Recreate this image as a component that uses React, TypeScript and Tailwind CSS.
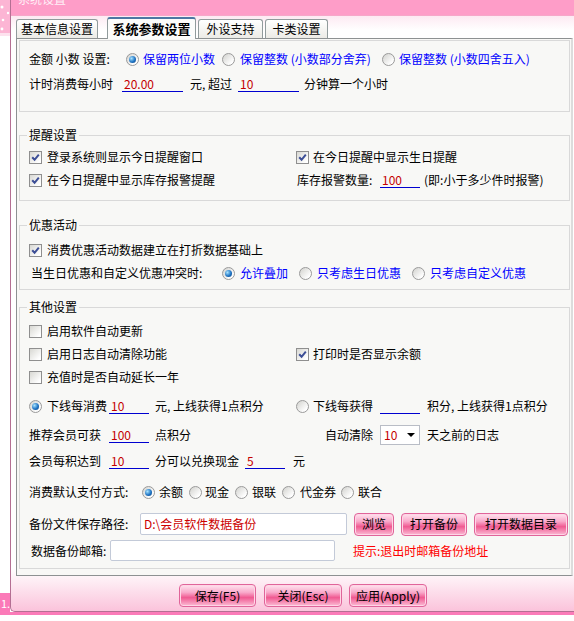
import React from "react";

// XP style radio button
function Radio({ checked = false }: { checked?: boolean }) {
  return (
    <span className="flex h-[13px] w-[13px] shrink-0 items-center justify-center rounded-full border border-[#9a9a9a] bg-[linear-gradient(135deg,#d2d2ce,#ffffff_80%)]">
      {checked && (
        <span className="h-[7px] w-[7px] rounded-full bg-[radial-gradient(circle_at_35%_35%,#a8e4ff,#1f74c4_55%,#0b3f7a)]" />
      )}
    </span>
  );
}

function Check({ checked = false }: { checked?: boolean }) {
  return (
    <span className="flex h-[13px] w-[13px] shrink-0 items-center justify-center border border-[#8f8f8f] bg-[linear-gradient(135deg,#d8d8d3,#ffffff_85%)]">
      {checked && (
        <svg width="9" height="9" viewBox="0 0 9 9">
          <path d="M1.2 4.2 L3.6 6.8 L7.8 1.6" fill="none" stroke="#3c4e96" strokeWidth="2" />
        </svg>
      )}
    </span>
  );
}

// underline-only edit box
function Line({ value = "", className = "" }: { value?: string; className?: string }) {
  return (
    <span className={`flex h-[15px] shrink-0 items-end border-b border-[#0000d0] pl-[2px] text-[#c40000] ${className}`}>
      {value}
    </span>
  );
}

function PinkBtn({ children, className = "" }: { children: React.ReactNode; className?: string }) {
  return (
    <span
      className={`flex shrink-0 items-center justify-center rounded-[4px] border border-[#e0649a] bg-[linear-gradient(#ffe4ef,#f9aacb_35%,#f05a92_60%,#fbbcd5)] shadow-[inset_0_0_0_1px_#ffd6e6] ${className}`}
    >
      {children}
    </span>
  );
}

const blue = "text-[#0000ff]";

function LeftStrip() {
  return (
    <div className="flex w-[10px] shrink-0 flex-col">
      <svg width="10" height="33" className="block">
        <rect width="10" height="33" fill="#fcb5d4" />
        <circle cx="2" cy="7" r="1.5" fill="#fff" />
        <circle cx="8" cy="13" r="1.2" fill="#fff" />
        <circle cx="3" cy="20" r="1.3" fill="#fff" />
        <circle cx="2" cy="29" r="1.4" fill="#fff" />
      </svg>
      <div className="h-[3px] bg-[#fde2ee]" />
      <div className="flex-1 bg-white" />
      <div className="flex h-[19px] items-center bg-[#fb7ab8] pl-[1px] text-[11px] text-white">1.</div>
    </div>
  );
}

function Tabs() {
  const tab =
    "flex h-[19px] shrink-0 items-center justify-center rounded-t-[3px] border border-b-0 border-[#919b9c] bg-[linear-gradient(#ffffff,#ecebe6)]";
  return (
    <div className="flex h-[22px] items-end">
      <span className={`${tab} w-[82px]`}>基本信息设置</span>
      <span className="relative z-10 -mb-[1px] ml-[9px] flex h-[22px] w-[89px] shrink-0 items-center justify-center rounded-t-[3px] border border-b-0 border-t-2 border-[#919b9c] border-t-[#4b77a3] bg-[#fcfcfb] text-[13px] font-bold">
        系统参数设置
      </span>
      <span className={`${tab} ml-[2px] w-[65px]`}>外设支持</span>
      <span className={`${tab} ml-[2px] w-[63px]`}>卡类设置</span>
    </div>
  );
}

function Group({ title, className, children }: { title: string; className: string; children: React.ReactNode }) {
  return (
    <fieldset className={`w-[551px] border border-[#d9d9d9] pl-[9px] ${className}`}>
      <legend className="-ml-[2px] px-[2px] leading-[14px]">{title}</legend>
      {children}
    </fieldset>
  );
}

function Panel() {
  return (
    <div className="flex w-[557px] flex-col border-t border-r-2 border-b border-l border-[#8d9192] border-r-[#dcdcdc] bg-[#f8f8f6] pb-[6px] pl-[2px]">
      {/* amount section */}
      <div className="mt-[1px] flex h-[72px] w-[551px] flex-col border border-[#d9d9d9] pl-[9px]">
        <div className="mt-[8px] flex h-[20px] items-center">
          <span className="w-[97px] shrink-0">金额 小数 设置:</span>
          <span className="flex w-[96px] shrink-0 items-center">
            <Radio checked />
            <span className={`ml-[4px] ${blue}`}>保留两位小数</span>
          </span>
          <span className="flex w-[160px] shrink-0 items-center">
            <Radio />
            <span className={`ml-[5px] ${blue}`}>保留整数 (小数部分舍弃)</span>
          </span>
          <span className="flex items-center">
            <Radio />
            <span className={`ml-[4px] ${blue}`}>保留整数 (小数四舍五入)</span>
          </span>
        </div>
        <div className="mt-[5px] flex h-[20px] items-center">
          <span className="w-[93px] shrink-0">计时消费每小时</span>
          <Line value="20.00" className="w-[61px]" />
          <span className="ml-[7px] w-[48px] shrink-0">元, 超过</span>
          <Line value="10" className="w-[61px]" />
          <span className="ml-[5px]">分钟算一个小时</span>
        </div>
      </div>

      <Group title="提醒设置" className="mt-[16px] pt-[5px] pb-[10px]">
        <div className="flex h-[20px] items-center">
          <span className="flex w-[267px] shrink-0 items-center">
            <Check checked />
            <span className="ml-[5px]">登录系统则显示今日提醒窗口</span>
          </span>
          <Check checked />
          <span className="ml-[4px]">在今日提醒中显示生日提醒</span>
        </div>
        <div className="mt-[3px] flex h-[20px] items-center">
          <span className="flex w-[268px] shrink-0 items-center">
            <Check checked />
            <span className="ml-[5px]">在今日提醒中显示库存报警提醒</span>
          </span>
          <span className="w-[83px] shrink-0">库存报警数量:</span>
          <Line value="100" className="w-[40px]" />
          <span className="ml-[4px]">(即:小于多少件时报警)</span>
        </div>
      </Group>

      <Group title="优惠活动" className="mt-[17px] pt-[8px] pb-[6px]">
        <div className="flex h-[20px] items-center">
          <Check checked />
          <span className="ml-[5px]">消费优惠活动数据建立在打折数据基础上</span>
        </div>
        <div className="mt-[3px] flex h-[20px] items-center">
          <span className="w-[193px] shrink-0 pl-[2px]">当生日优惠和自定义优惠冲突时:</span>
          <span className="flex w-[77px] shrink-0 items-center">
            <Radio checked />
            <span className={`ml-[5px] ${blue}`}>允许叠加</span>
          </span>
          <span className="flex w-[113px] shrink-0 items-center">
            <Radio />
            <span className={`ml-[5px] ${blue}`}>只考虑生日优惠</span>
          </span>
          <Radio />
          <span className={`ml-[5px] ${blue}`}>只考虑自定义优惠</span>
        </div>
      </Group>

      <Group title="其他设置" className="mt-[10px] pt-[7px] pb-[7px]">
        <div className="flex h-[20px] items-center">
          <Check />
          <span className="ml-[5px]">启用软件自动更新</span>
        </div>
        <div className="mt-[3px] flex h-[20px] items-center">
          <span className="flex w-[267px] shrink-0 items-center">
            <Check />
            <span className="ml-[5px]">启用日志自动清除功能</span>
          </span>
          <Check checked />
          <span className="ml-[4px]">打印时是否显示余额</span>
        </div>
        <div className="mt-[3px] flex h-[20px] items-center">
          <Check />
          <span className="ml-[5px]">充值时是否自动延长一年</span>
        </div>
        <div className="mt-[9px] flex h-[20px] items-center">
          <span className="flex w-[267px] shrink-0 items-center">
            <Radio checked />
            <span className="ml-[5px] w-[62px] shrink-0">下线每消费</span>
            <Line value="10" className="w-[40px]" />
            <span className="ml-[6px]">元, 上线获得1点积分</span>
          </span>
          <Radio />
          <span className="ml-[4px] w-[67px] shrink-0">下线每获得</span>
          <Line className="w-[40px]" />
          <span className="ml-[7px]">积分, 上线获得1点积分</span>
        </div>
        <div className="mt-[9px] flex h-[20px] items-center">
          <span className="flex w-[267px] shrink-0 items-center">
            <span className="w-[80px] shrink-0">推荐会员可获</span>
            <Line value="100" className="w-[40px]" />
            <span className="ml-[6px]">点积分</span>
          </span>
          <span className="w-[84px] shrink-0 pl-[29px]">自动清除</span>
          <span className="flex h-[20px] w-[40px] shrink-0 items-center justify-between border border-[#b9bdc6] bg-white pr-[4px] pl-[3px]">
            <span className="text-[#c40000]">10</span>
            <svg width="8" height="4" viewBox="0 0 8 4">
              <path d="M0 0H8L4 4Z" fill="#000" />
            </svg>
          </span>
          <span className="ml-[7px]">天之前的日志</span>
        </div>
        <div className="mt-[6px] flex h-[20px] items-center">
          <span className="w-[80px] shrink-0">会员每积达到</span>
          <Line value="10" className="w-[40px]" />
          <span className="ml-[6px] w-[90px] shrink-0">分可以兑换现金</span>
          <Line value="5" className="w-[40px]" />
          <span className="ml-[8px]">元</span>
        </div>
        <div className="mt-[11px] flex h-[20px] items-center">
          <span className="w-[113px] shrink-0">消费默认支付方式:</span>
          <span className="flex w-[47px] shrink-0 items-center">
            <Radio checked />
            <span className="ml-[4px]">余额</span>
          </span>
          <span className="flex w-[46px] shrink-0 items-center">
            <Radio />
            <span className="ml-[3px]">现金</span>
          </span>
          <span className="flex w-[47px] shrink-0 items-center">
            <Radio />
            <span className="ml-[4px]">银联</span>
          </span>
          <span className="flex w-[59px] shrink-0 items-center">
            <Radio />
            <span className="ml-[5px]">代金券</span>
          </span>
          <Radio />
          <span className="ml-[4px]">联合</span>
        </div>
        <div className="mt-[11px] flex h-[22px] items-center">
          <span className="w-[111px] shrink-0">备份文件保存路径:</span>
          <span className="flex h-[22px] w-[207px] shrink-0 items-center rounded-[2px] border border-[#c3cad8] bg-white pl-[3px] text-[#cc0000]">
            D:\会员软件数据备份
          </span>
          <PinkBtn className="ml-[7px] h-[23px] w-[40px]">浏览</PinkBtn>
          <PinkBtn className="ml-[7px] h-[23px] w-[66px]">打开备份</PinkBtn>
          <PinkBtn className="ml-[7px] h-[23px] w-[94px]">打开数据目录</PinkBtn>
        </div>
        <div className="mt-[5px] flex h-[21px] items-center">
          <span className="w-[81px] shrink-0 pl-[2px]">数据备份邮箱:</span>
          <span className="h-[21px] w-[225px] shrink-0 rounded-[2px] border border-[#c3cad8] bg-white" />
          <span className="ml-[18px] text-[#ff0000]">提示:退出时邮箱备份地址</span>
        </div>
      </Group>
    </div>
  );
}

function Window() {
  return (
    <div className="flex h-[612px] flex-1 flex-col overflow-hidden rounded-bl-[5px] border-b border-l border-[#b46f93] bg-[linear-gradient(#fbd3e5,#ffffff_5%,#ffffff_93%,#fbc3db)]">
      <div className="h-[16px] shrink-0 overflow-hidden border-b border-[#f6a7c9] bg-[#fe9dc8] pl-[7px]">
        <div className="-mt-[9px] text-[12px] leading-[16px] text-[#fff0f7]">系统设置</div>
      </div>
      <div className="flex flex-col pl-[5px]">
        <Tabs />
        <Panel />
      </div>
      <div className="mt-[8px] flex pl-[168px]">
        <PinkBtn className="h-[23px] w-[77px]">保存(F5)</PinkBtn>
        <PinkBtn className="ml-[8px] h-[23px] w-[78px]">关闭(Esc)</PinkBtn>
        <PinkBtn className="ml-[7px] h-[23px] w-[78px]">应用(Apply)</PinkBtn>
      </div>
    </div>
  );
}

export default function App() {
  return (
    <div className="flex h-[621px] w-[574px] flex-col overflow-hidden bg-white font-['Noto_Sans_CJK_SC',sans-serif] text-[12px] leading-[14px] text-black">
      <div className="flex h-[612px] shrink-0">
        <LeftStrip />
        <Window />
      </div>
      <div className="h-[3px] shrink-0 bg-[#fb7ab8]" />
      <div className="flex-1 bg-white" />
    </div>
  );
}
